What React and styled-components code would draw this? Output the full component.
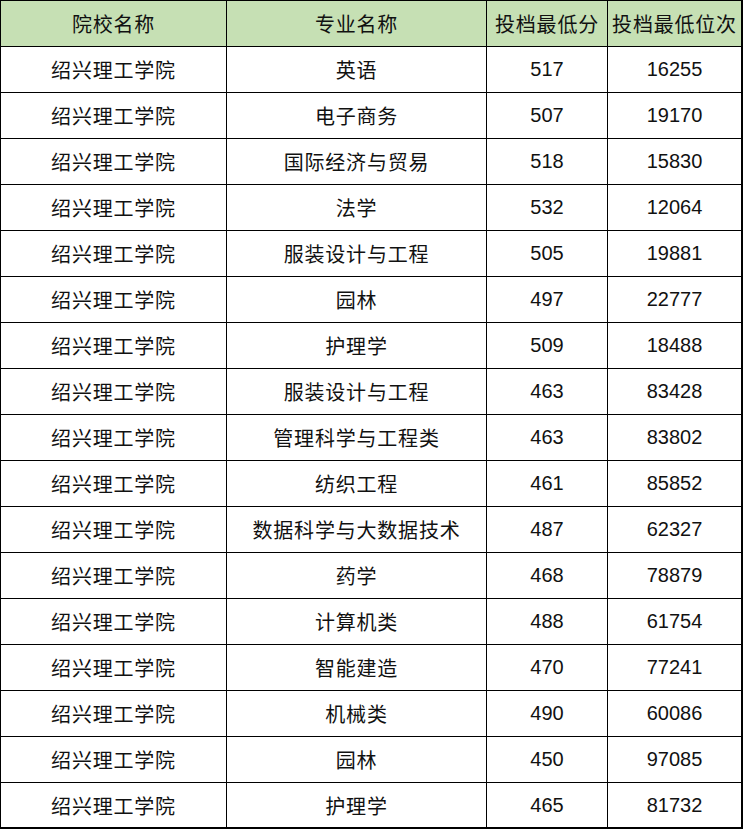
import React from "react";
import styled, { createGlobalStyle } from "styled-components";

const GlobalStyle = createGlobalStyle`
  html, body {
    margin: 0;
    padding: 0;
    background: #fff;
  }
`;

const Grid = styled.div`
  display: grid;
  grid-template-columns: 226px 260px 121px 135px;
  width: 743px;
  border-top: 1px solid #000;
  border-left: 1px solid #000;
  font-family: "Liberation Sans", Arial, "Noto Sans CJK SC", sans-serif;
  font-size: 20px;
  color: #111;
`;

const Cell = styled.div`
  box-sizing: border-box;
  height: 46px;
  display: flex;
  align-items: center;
  justify-content: center;
  white-space: nowrap;
  letter-spacing: ${(p) => (p.$cjk ? "0.8px" : "0")};
  border-right: ${(p) => (p.$last ? "2px" : "1px")} solid #000;
  border-bottom: ${(p) => (p.$bottom ? "2px" : "1px")} solid #000;
  background: ${(p) => (p.$head ? "#c6e0b4" : "#fff")};
`;

const headers = ["院校名称", "专业名称", "投档最低分", "投档最低位次"];

const rows = [
  ["英语", 517, 16255],
  ["电子商务", 507, 19170],
  ["国际经济与贸易", 518, 15830],
  ["法学", 532, 12064],
  ["服装设计与工程", 505, 19881],
  ["园林", 497, 22777],
  ["护理学", 509, 18488],
  ["服装设计与工程", 463, 83428],
  ["管理科学与工程类", 463, 83802],
  ["纺织工程", 461, 85852],
  ["数据科学与大数据技术", 487, 62327],
  ["药学", 468, 78879],
  ["计算机类", 488, 61754],
  ["智能建造", 470, 77241],
  ["机械类", 490, 60086],
  ["园林", 450, 97085],
  ["护理学", 465, 81732],
];

export default function App() {
  return (
    <>
      <GlobalStyle />
      <Grid>
        {headers.map((h, i) => (
          <Cell key={h} $head $cjk $last={i === 3}>
            {h}
          </Cell>
        ))}
        {rows.map((r, ri) => {
          const cells = ["绍兴理工学院", ...r];
          const bottom = ri === rows.length - 1;
          return cells.map((c, ci) => (
            <Cell
              key={ri + "-" + ci}
              $cjk={typeof c === "string"}
              $last={ci === 3}
              $bottom={bottom}
            >
              {c}
            </Cell>
          ));
        })}
      </Grid>
    </>
  );
}
